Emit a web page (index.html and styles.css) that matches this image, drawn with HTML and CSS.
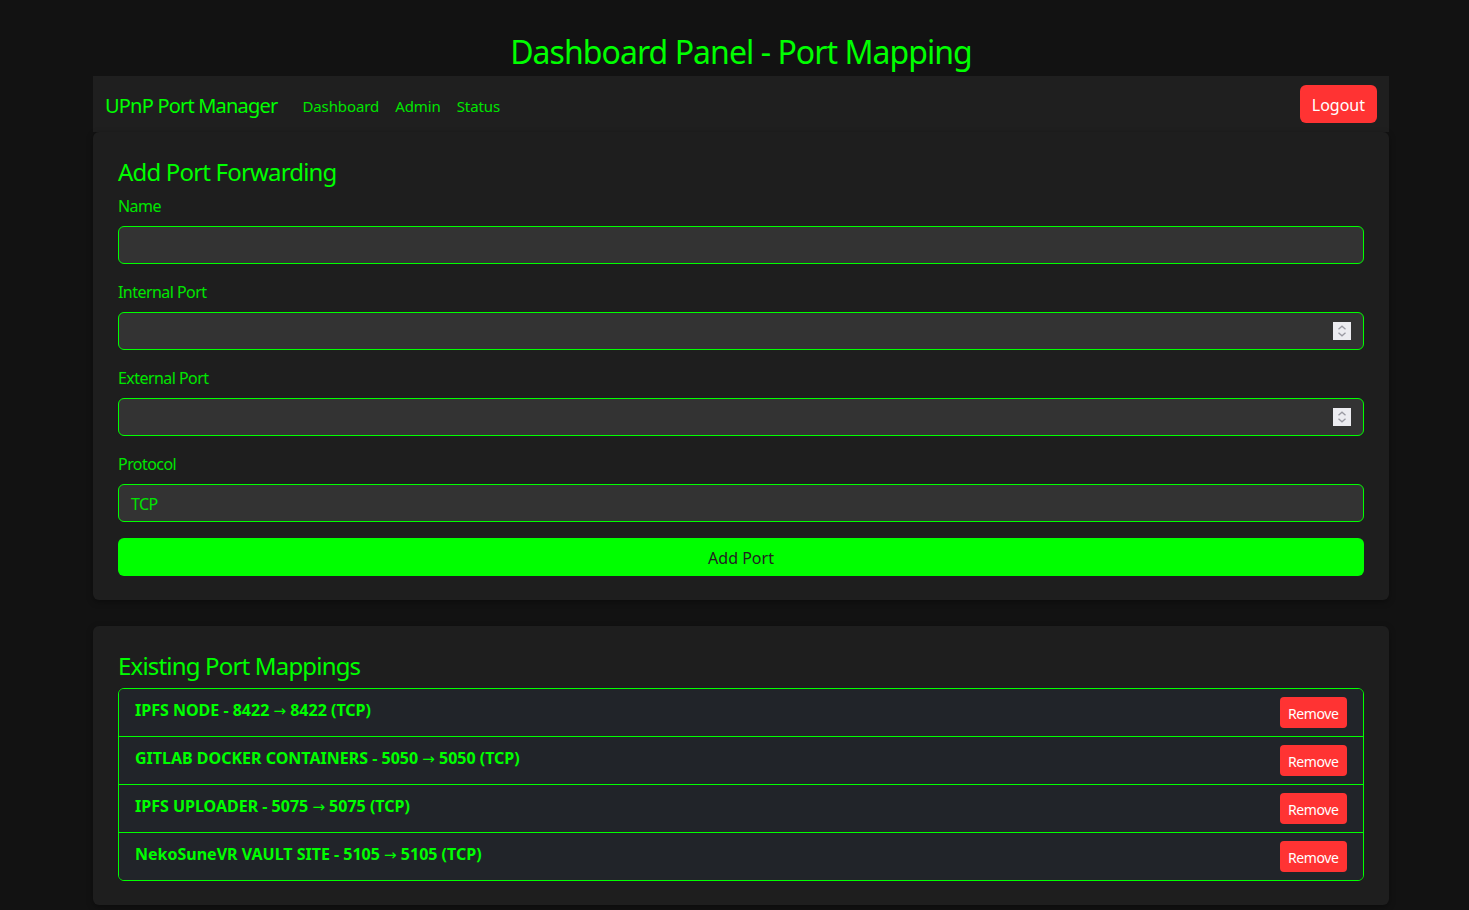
FILE: index.html
```html
<!DOCTYPE html>
<html lang="en">
<head>
<meta charset="utf-8">
<title>Dashboard Panel - Port Mapping</title>
<link rel="stylesheet" href="styles.css">
</head>
<body>
<div class="container">
  <h1 class="page-title">Dashboard Panel - Port Mapping</h1>
  <nav class="navbar">
    <div class="nav-left">
      <a class="brand" href="#">UPnP Port Manager</a>
      <ul class="nav-links">
        <li><a href="#">Dashboard</a></li>
        <li><a href="#">Admin</a></li>
        <li><a href="#">Status</a></li>
      </ul>
    </div>
    <button class="btn-logout" type="button">Logout</button>
  </nav>

  <section class="card">
    <h4 class="card-title">Add Port Forwarding</h4>
    <form class="form">
      <div class="field">
        <label class="label">Name</label>
        <input class="input" type="text">
      </div>
      <div class="field">
        <label class="label">Internal Port</label>
        <div class="input number">
          <span class="spinner"><svg width="18" height="18" viewBox="0 0 18 18"><path d="M5.5 7.2 9 4.2l3.5 3M5.5 10.8 9 13.8l3.5-3" fill="none" stroke="#9a9aa2" stroke-width="1.3"/></svg></span>
        </div>
      </div>
      <div class="field">
        <label class="label">External Port</label>
        <div class="input number">
          <span class="spinner"><svg width="18" height="18" viewBox="0 0 18 18"><path d="M5.5 7.2 9 4.2l3.5 3M5.5 10.8 9 13.8l3.5-3" fill="none" stroke="#9a9aa2" stroke-width="1.3"/></svg></span>
        </div>
      </div>
      <div class="field">
        <label class="label">Protocol</label>
        <div class="input select">TCP</div>
      </div>
      <button class="btn-add" type="button">Add Port</button>
    </form>
  </section>

  <section class="card">
    <h4 class="card-title">Existing Port Mappings</h4>
    <ul class="list">
      <li class="list-item"><span class="item-text">IPFS NODE - 8422 <span class="arrow">→</span> 8422 (TCP)</span><button class="btn-remove" type="button">Remove</button></li>
      <li class="list-item"><span class="item-text">GITLAB DOCKER CONTAINERS - 5050 <span class="arrow">→</span> 5050 (TCP)</span><button class="btn-remove" type="button">Remove</button></li>
      <li class="list-item"><span class="item-text">IPFS UPLOADER - 5075 <span class="arrow">→</span> 5075 (TCP)</span><button class="btn-remove" type="button">Remove</button></li>
      <li class="list-item"><span class="item-text">NekoSuneVR VAULT SITE - 5105 <span class="arrow">→</span> 5105 (TCP)</span><button class="btn-remove" type="button">Remove</button></li>
    </ul>
  </section>
</div>
</body>
</html>
```
FILE: styles.css
```css
* { box-sizing: border-box; }
html, body { margin: 0; padding: 0; }
body {
  background: #121212;
  color: #00ff00;
  font-family: "Noto Sans", "Open Sans", sans-serif;
  font-size: 16px;
  line-height: 1.5;
  letter-spacing: -0.55px;
  padding: 33px 80px 40px 93px;
}
.container { width: 1296px; }
.page-title {
  margin: 0 0 5px;
  font-size: 32px;
  font-weight: 400;
  line-height: 38px;
  text-align: center;
  color: #00ff00;
  letter-spacing: -0.95px;
}
.navbar {
  display: flex;
  align-items: center;
  justify-content: space-between;
  height: 56px;
  padding: 0 12px;
  background: #1f1f1f;
}
.nav-left { display: flex; align-items: center; padding-top: 3px; }
.brand {
  font-size: 20px;
  color: #00ff00;
  text-decoration: none;
  margin-right: 25px;
  letter-spacing: -0.8px;
}
.nav-links { display: flex; list-style: none; margin: 0; padding: 0; gap: 16px; }
.nav-links a { color: #00e600; text-decoration: none; font-size: 15px; letter-spacing: -0.1px; }
.btn-logout {
  background: #ff3333;
  color: #fff;
  border: 0;
  border-radius: 6px;
  height: 38px;
  padding: 2px 12px 0;
  font: inherit;
  font-size: 16px;
}
.card {
  background: #1e1e1e;
  border-radius: 6px;
  padding: 25px 25px 24px;
  margin-bottom: 26px;
  box-shadow: 0 2px 6px rgba(0,0,0,0.35);
}
.card-title {
  margin: 0 0 8px;
  font-size: 24px;
  font-weight: 400;
  line-height: 29px;
  color: #00ff00;
  letter-spacing: -0.82px;
}
.form { display: flex; flex-direction: column; }
.field { display: flex; flex-direction: column; margin-bottom: 16px; }
.label { margin-bottom: 8px; padding-top: 1px; line-height: 23px; color: #00e600; }
.input {
  height: 38px;
  background: #333;
  border: 1px solid #00ff00;
  border-radius: 6px;
  padding: 0 12px;
  color: #00e600;
  font: inherit;
  display: flex;
  align-items: center;
  outline: none;
}
.number { justify-content: flex-end; padding-right: 12px; }
.spinner {
  width: 18px; height: 18px;
  background: #ececf0;
  display: flex; align-items: center; justify-content: center;
}
.select { font-size: 16px; padding-top: 1px; }
.btn-add {
  height: 38px;
  background: #00ff00;
  color: #222;
  border: 0;
  border-radius: 6px;
  padding-top: 2px;
  font: inherit;
  font-size: 16px;
}
.list {
  list-style: none;
  margin: 0; padding: 0;
  border: 1px solid #00ff00;
  border-radius: 6px;
  overflow: hidden;
}
.list-item {
  display: flex;
  align-items: center;
  justify-content: space-between;
  height: 48px;
  padding: 0 16px;
  background: #212429;
  border-top: 1px solid #00ff00;
}
.list-item:first-child { border-top: 0; height: 47px; }
.item-text { font-weight: 700; color: #00ff00; margin-top: -4px; letter-spacing: 0; }
.arrow { font-family: "DejaVu Sans", sans-serif; font-weight: 400; font-size: 15px; }
.btn-remove {
  background: #ff3333;
  color: #fff;
  border: 0;
  border-radius: 4px;
  height: 31px;
  padding: 1px 8.5px 0;
  font: inherit;
  font-size: 14px;
  letter-spacing: -0.4px;
}
```
